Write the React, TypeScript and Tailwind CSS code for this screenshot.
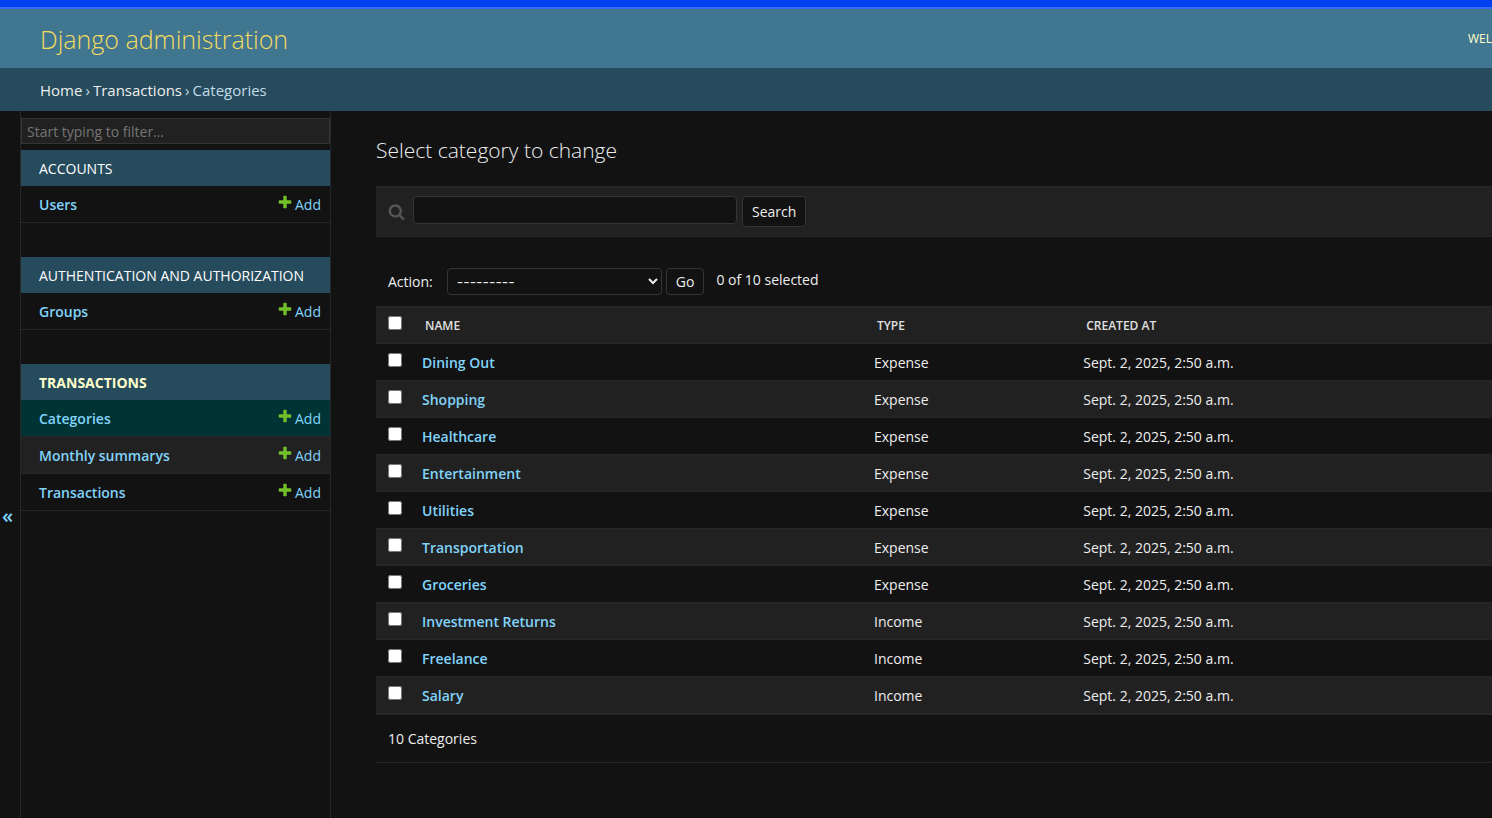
import { useState } from "react";

type Model = { name: string; current?: boolean; shaded?: boolean };
type AppGroup = { label: string; current?: boolean; models: Model[] };

const APPS: AppGroup[] = [
  { label: "ACCOUNTS", models: [{ name: "Users" }] },
  { label: "AUTHENTICATION AND AUTHORIZATION", models: [{ name: "Groups" }] },
  {
    label: "TRANSACTIONS",
    current: true,
    models: [
      { name: "Categories", current: true },
      { name: "Monthly summarys", shaded: true },
      { name: "Transactions" },
    ],
  },
];

const CATEGORIES = [
  { name: "Dining Out", type: "Expense" },
  { name: "Shopping", type: "Expense" },
  { name: "Healthcare", type: "Expense" },
  { name: "Entertainment", type: "Expense" },
  { name: "Utilities", type: "Expense" },
  { name: "Transportation", type: "Expense" },
  { name: "Groceries", type: "Expense" },
  { name: "Investment Returns", type: "Income" },
  { name: "Freelance", type: "Income" },
  { name: "Salary", type: "Income" },
];

const CREATED_AT = "Sept. 2, 2025, 2:50 a.m.";

function PlusIcon() {
  return (
    <svg viewBox="0 0 1792 1792" className="mb-1 size-4" fill="#70bf2b" aria-hidden="true">
      <path d="M1600 796v192q0 40-28 68t-68 28h-416v416q0 40-28 68t-68 28h-192q-40 0-68-28t-28-68v-416h-416q-40 0-68-28t-28-68v-192q0-40 28-68t68-28h416v-416q0-40 28-68t68-28h192q40 0 68 28t28 68v416h416q40 0 68 28t28 68z" />
    </svg>
  );
}

function SearchIcon() {
  return (
    <svg viewBox="0 0 1792 1792" className="size-[17px]" fill="#555555" aria-hidden="true">
      <path d="M1216 832q0-185-131.500-316.500t-316.500-131.500-316.500 131.500-131.500 316.500 131.500 316.500 316.500 131.500 316.500-131.500 131.500-316.500zm512 832q0 52-38 90t-90 38q-54 0-90-38l-343-342q-179 124-399 124-143 0-273.500-55.500t-225-150-150-225-55.500-273.500 55.500-273.500 150-225 225-150 273.500-55.500 273.500 55.500 225 150 150 225 55.500 273.500q0 220-124 399l343 343q37 37 37 90z" />
    </svg>
  );
}

function Sidebar() {
  return (
    <nav aria-label="Sidebar" className="w-[311px] shrink-0 border-x border-[#272727] pt-[7px]">
      <input
        type="search"
        aria-label="Filter navigation items"
        placeholder="Start typing to filter…"
        className="mb-1.5 block h-[26px] w-full border border-[#353535] bg-[#212121] px-[5px] text-[14px] text-[#eeeeee] outline-none placeholder:text-[#757575]"
      />
      {APPS.map((app) => (
        <section key={app.label} className="mb-[34px]">
          <h2
            className={
              app.current
                ? "flex h-9 items-center bg-[#264b5d] pl-[18px] text-[14px] font-bold text-[#ffffcc]"
                : "flex h-9 items-center bg-[#264b5d] pl-[18px] text-[14px] text-white"
            }
          >
            <a href="#app">{app.label}</a>
          </h2>
          {app.models.map((model) => (
            <div
              key={model.name}
              className={
                "flex h-[37px] items-center justify-between border-b border-[#272727] pl-[18px] pr-[9px] text-[14px] text-[#81d4fa] " +
                (model.current ? "bg-[#003333]" : model.shaded ? "bg-[#212121]" : "bg-[#121212]")
              }
            >
              <a href="#model" className="font-semibold">
                {model.name}
              </a>
              <a href="#add" className="flex items-center gap-0.5">
                <PlusIcon />
                Add
              </a>
            </div>
          ))}
        </section>
      ))}
    </nav>
  );
}

export default function App() {
  const [checked, setChecked] = useState<boolean[]>(CATEGORIES.map(() => false));
  const count = checked.filter(Boolean).length;

  return (
    <div className="flex min-h-screen flex-col overflow-hidden bg-[#121212] font-['Open_Sans','Noto_Sans',sans-serif] text-[14px] text-[#eeeeee]">
      <div className="h-[9px] border-b-2 border-[#396cf5] bg-[#0040f0]" />
      <header className="flex h-[59px] items-center justify-between bg-[#417690] pl-10">
        <h1 className="pt-0.5 text-[25px] font-light text-[#f5dd5d]">
          <a href="#home">Django administration</a>
        </h1>
        <span className="text-[12px] text-[#ffffcc]">WEL</span>
      </header>
      <nav aria-label="Breadcrumbs" className="flex h-[43px] items-center gap-[3px] bg-[#264b5d] pl-10 pt-0.5 text-[15px] text-[#c4dce8]">
        <a href="#home" className="text-[#eeeeee]">Home</a>
        <span>›</span>
        <a href="#transactions" className="text-[#eeeeee]">Transactions</a>
        <span>›</span>
        <span>Categories</span>
      </nav>

      <div className="flex grow">
        <button type="button" aria-label="Toggle navigation" className="flex w-5 shrink-0 flex-col items-start pl-0.5 pt-[391px] text-[20px] font-semibold leading-7 text-[#81d4fa]">
          «
        </button>
        <Sidebar />

        <main className="min-w-0 grow pl-[45px] pt-6">
          <h2 className="mb-[21px] text-[21px] font-light leading-[30px]">Select category to change</h2>

          <form className="flex h-[51px] items-start border-y border-[#272727] bg-[#212121] pl-3 pt-[9px]" onSubmit={(e) => e.preventDefault()}>
            <label htmlFor="searchbar" aria-label="Search" className="mr-2 mt-[7px]">
              <SearchIcon />
            </label>
            <input id="searchbar" type="text" className="mr-[5px] h-7 w-[324px] rounded border border-[#353535] bg-[#121212] px-1.5 outline-none" />
            <button type="submit" className="h-[31px] rounded border border-[#353535] bg-[#121212] px-[9px]">
              Search
            </button>
          </form>

          <div className="flex items-start pb-[11px] pl-3 pt-[31px] leading-[27px]">
            <label htmlFor="action" className="mr-3.5">Action:</label>
            <select id="action" className="mr-1 h-[27px] w-[215px] rounded border border-[#353535] bg-[#121212] px-[5px] font-['Inter',sans-serif] outline-none">
              <option>---------</option>
              <option>Delete selected categories</option>
            </select>
            <button type="button" className="mr-3 h-[27px] rounded border border-[#353535] bg-[#121212] px-[9px] leading-[25px]">
              Go
            </button>
            <span className="leading-6">{count} of 10 selected</span>
          </div>

          <table className="w-full table-fixed border-collapse text-left">
            <colgroup>
              <col className="w-[38px]" />
              <col className="w-[40.5%]" />
              <col className="w-[18.75%]" />
              <col />
            </colgroup>
            <thead>
              <tr className="h-[37px] border-y border-[#272727] bg-[#212121] text-[12px] text-[#e0e0e0]">
                <th className="pl-3">
                  <input
                    type="checkbox"
                    aria-label="Select all"
                    className="mb-1 block size-3.5"
                    checked={count === CATEGORIES.length}
                    onChange={(e) => setChecked(CATEGORIES.map(() => e.target.checked))}
                  />
                </th>
                <th className="pl-[11px] pt-0.5 font-semibold">NAME</th>
                <th className="pl-[11px] pt-0.5 font-semibold">TYPE</th>
                <th className="pl-[11px] pt-0.5 font-semibold">CREATED AT</th>
              </tr>
            </thead>
            <tbody>
              {CATEGORIES.map((c, i) => (
                <tr key={c.name} className="h-[37px] border-b border-[#272727] even:bg-[#212121]">
                  <td className="pl-3">
                    <input
                      type="checkbox"
                      aria-label={c.name}
                      className="mb-1 block size-3.5"
                      checked={checked[i]}
                      onChange={() => setChecked(checked.map((v, j) => (j === i ? !v : v)))}
                    />
                  </td>
                  <td className="pl-2">
                    <a href="#category" className="font-semibold text-[#81d4fa]">{c.name}</a>
                  </td>
                  <td className="pl-2">{c.type}</td>
                  <td className="pl-2">{CREATED_AT}</td>
                </tr>
              ))}
            </tbody>
          </table>
          <p className="flex h-[49px] items-center border-y border-[#272727] pl-3">10 Categories</p>
        </main>
      </div>
    </div>
  );
}
